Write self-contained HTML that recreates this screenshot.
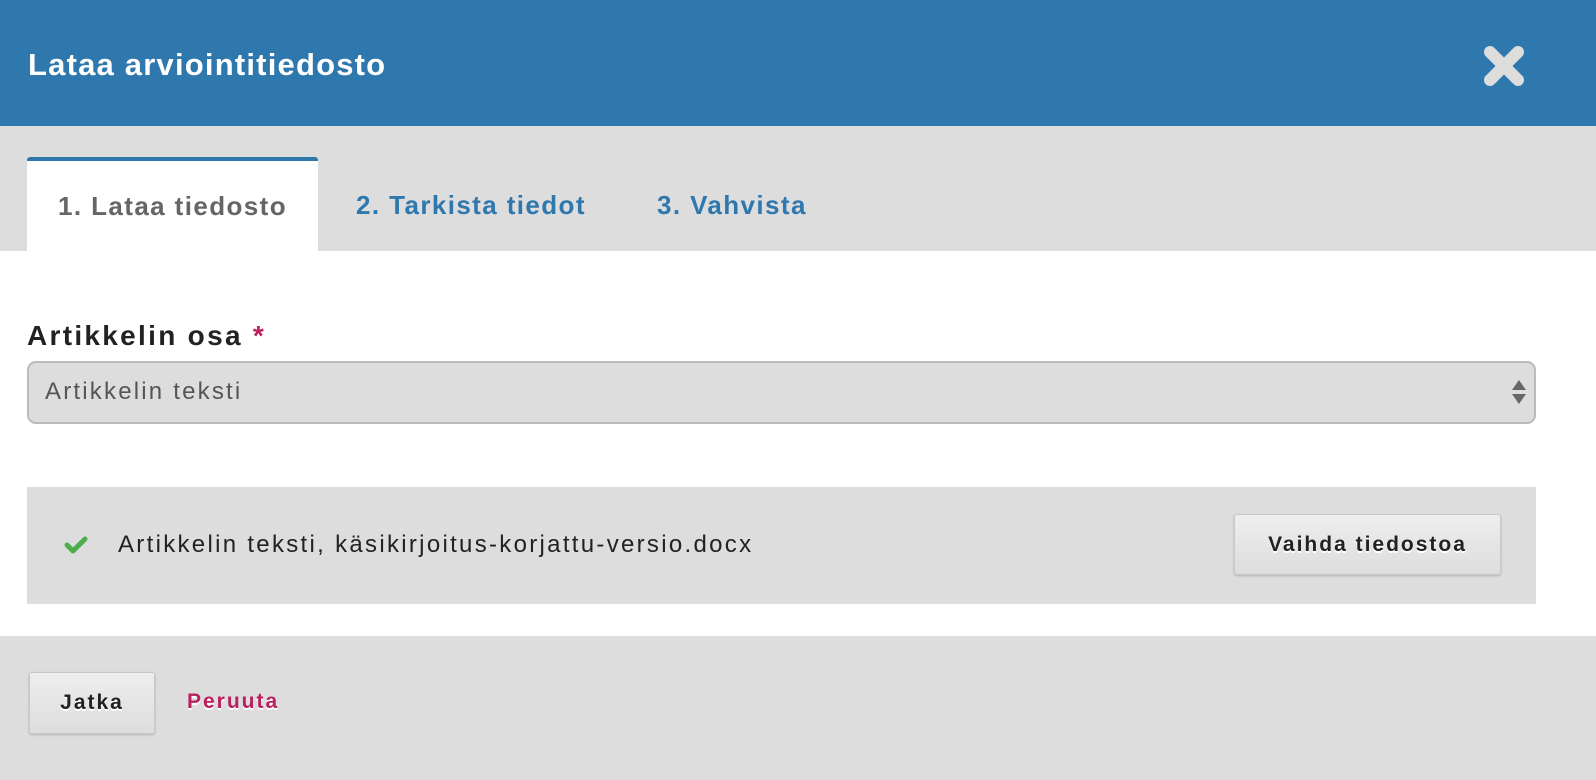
<!DOCTYPE html>
<html><head><meta charset="utf-8"><style>
*{box-sizing:border-box;margin:0;padding:0}
body{width:1596px;height:780px;overflow:hidden;font-family:"Liberation Sans",sans-serif;background:#fff;position:relative}
.hdr{position:absolute;left:0;top:0;width:1596px;height:126px;background:#2f78ad}
.hdr h1{position:absolute;left:28px;top:47px;font-size:31px;font-weight:bold;color:#fff;letter-spacing:1.2px}
.tabs{position:absolute;left:0;top:126px;width:1596px;height:125px;background:#ddd}
.tab{position:absolute;top:31px;height:94px;font-size:26px;font-weight:bold;color:#2f78ad;line-height:96px;letter-spacing:1.4px}
.tab.active{left:27px;width:291px;background:#fff;border-top:4px solid #2f78ad;border-radius:3px 3px 0 0;color:#666;text-align:center;line-height:90px}
.lbl{position:absolute;left:27px;top:320px;font-size:28px;font-weight:bold;color:#222;letter-spacing:2.3px}
.lbl span{color:#b9205f}
.sel{position:absolute;left:27px;top:361px;width:1509px;height:63px;background:#ddd;border:2px solid #bbb;border-radius:9px;font-size:24px;color:#555;padding-left:16px;line-height:58px;letter-spacing:2.2px}
.arr{position:absolute;width:0;height:0;border-left:7px solid transparent;border-right:7px solid transparent}
.box{position:absolute;left:27px;top:487px;width:1509px;height:117px;background:#ddd}
.box .t{position:absolute;left:91px;top:44px;font-size:24px;color:#222;letter-spacing:2.3px}
.btn{position:absolute;background:linear-gradient(#eee,#ddd);border:1px solid #c8c8c8;border-radius:3px;box-shadow:0 1px 2px rgba(0,0,0,.2);font-weight:bold;color:#222;font-size:21px;text-align:center;text-shadow:0 2px 0 #fff;letter-spacing:2px}
.foot{position:absolute;left:0;top:636px;width:1596px;height:144px;background:#ddd}
</style></head><body>
<div class="hdr"><h1>Lataa arviointitiedosto</h1>
<svg style="position:absolute;left:1481px;top:43px" width="46" height="46" viewBox="0 0 46 46"><path d="M9 9L37 37M37 9L9 37" stroke="#ddd" stroke-width="12" stroke-linecap="round"/></svg></div>
<div class="tabs">
<div class="tab active">1. Lataa tiedosto</div>
<div class="tab" style="left:356px">2. Tarkista tiedot</div>
<div class="tab" style="left:657px">3. Vahvista</div>
</div>
<div class="lbl">Artikkelin osa <span>*</span></div>
<div class="sel">Artikkelin teksti
<div class="arr" style="top:17px;border-bottom:10px solid #666;right:8px"></div>
<div class="arr" style="top:31px;border-top:10px solid #666;right:8px"></div>
</div>
<div class="box">
<svg style="position:absolute;left:37px;top:48px" width="24" height="20" viewBox="0 0 24 20"><path d="M3 10L9 16L21 4" stroke="#4cae4c" stroke-width="5" fill="none" stroke-linecap="round" stroke-linejoin="round"/></svg>
<div class="t">Artikkelin teksti, käsikirjoitus-korjattu-versio.docx</div>
<div class="btn" style="left:1207px;top:27px;width:267px;height:61px;line-height:59px">Vaihda tiedostoa</div>
</div>
<div class="foot">
<div class="btn" style="left:29px;top:36px;width:126px;height:62px;line-height:60px">Jatka</div>
<div style="position:absolute;left:187px;top:54px;font-size:21px;font-weight:bold;color:#b9205f;text-shadow:0 2px 0 #fff;letter-spacing:2px">Peruuta</div>
</div>
</body></html>
